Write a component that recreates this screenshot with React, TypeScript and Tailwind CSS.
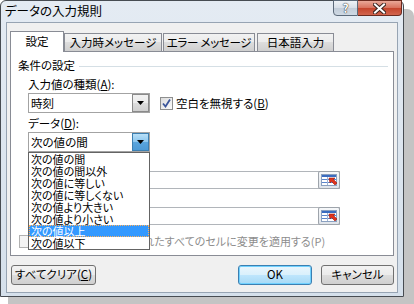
import React from 'react'

const items = [
  '次の値の間',
  '次の値の間以外',
  '次の値に等しい',
  '次の値に等しくない',
  '次の値より大きい',
  '次の値より小さい',
  '次の値以上',
  '次の値以下',
]

function Arrow() {
  return (
    <svg width="7" height="4" viewBox="0 0 7 4">
      <polygon points="0,0 7,0 3.5,4" fill="#000" />
    </svg>
  )
}

function Combo({ value, hot }: { value: string; hot?: boolean }) {
  return (
    <div className="flex h-[20px] w-[122px] border border-[#a3a3a3] bg-white">
      <div className="flex-1 pl-[2px] leading-[18px]">{value}</div>
      {hot ? (
        <div className="flex w-[17px] items-center justify-center border border-[#3c7fb1] bg-[linear-gradient(#b9e0f8_0%,#8cc6ee_50%,#5aa5dd_50%,#4d9ad6_100%)]">
          <Arrow />
        </div>
      ) : (
        <div className="flex w-[17px] items-center justify-center border border-[#8a8a8a] bg-[linear-gradient(#f2f2f2_0%,#ebebeb_50%,#dddddd_50%,#cfcfcf_100%)]">
          <Arrow />
        </div>
      )}
    </div>
  )
}

function RangeIcon() {
  return (
    <svg width="17" height="12" viewBox="0 0 17 12">
      <rect x="0.5" y="0.5" width="15" height="11" fill="#fff" stroke="#8aa0c0" />
      <rect x="1" y="1" width="14" height="2" fill="#3a6cc0" />
      <line x1="1" y1="5.5" x2="15" y2="5.5" stroke="#5b86cc" />
      <line x1="1" y1="8.5" x2="15" y2="8.5" stroke="#5b86cc" />
      <line x1="6.5" y1="3" x2="6.5" y2="11" stroke="#9fb3d3" />
      <polygon points="8,4 14,4 12.5,5.5 16,9 14,11 10.5,7.5 9,9" fill="#e0321c" stroke="#9c1a0c" strokeWidth="0.6" />
    </svg>
  )
}

function RangeInput() {
  return (
    <div className="flex h-[18px] w-[312px] border border-[#b1b5ba] bg-white">
      <div className="flex-1" />
      <div className="-my-px -mr-px flex w-[22px] items-center justify-center rounded-[2px] border border-[#9ea4ab] bg-[linear-gradient(#f6f8fa,#dfe4ea)]">
        <RangeIcon />
      </div>
    </div>
  )
}

export default function App() {
  return (
    <div className="relative h-[304px] w-[414px] overflow-hidden bg-white font-['Noto_Sans_CJK_JP',sans-serif] text-[11.5px] text-black [font-feature-settings:'palt']">
      {/* Window */}
      <div className="flex h-[297px] w-[404px] flex-col rounded-t-[6px] border border-[#474c52] bg-[linear-gradient(#e4ebf3,#d5e0eb)] shadow-[9px_10px_0_1px_#c4c4c4]">
        {/* Title bar */}
        <div className="flex h-[21px] items-start justify-between">
          <div className="pl-[4px] pt-[1px] text-[12.5px] leading-[18px]">データの入力規則</div>
          <div className="-mt-px mr-[1px] flex">
            <div className="flex h-[16px] w-[25px] items-center justify-center rounded-bl-[4px] border border-[#5c6a7a] bg-[linear-gradient(#eef2f6_0%,#d6dee7_50%,#c1ccd8_50%,#cfd9e4_100%)] text-[12px] font-bold leading-none text-white [text-shadow:0_0_1px_#222,0_0_1px_#222]">
              ?
            </div>
            <div className="flex h-[16px] w-[44px] items-center justify-center rounded-br-[4px] border border-l-0 border-[#6b2a1f] bg-[linear-gradient(#e9a898_0%,#d8705c_50%,#c4432b_50%,#d2654e_100%)]">
              <svg width="13" height="11" viewBox="0 0 13 11">
                <path d="M2 1.5 L11 9.5 M11 1.5 L2 9.5" stroke="#3b2420" strokeWidth="4" strokeLinecap="square" />
                <path d="M2 1.5 L11 9.5 M11 1.5 L2 9.5" stroke="#fff" strokeWidth="2" strokeLinecap="square" />
              </svg>
            </div>
          </div>
        </div>

        {/* Client area */}
        <div className="mx-[5px] flex h-[271px] flex-col border border-[#97a4b3] bg-[#f0f0f0]">
          {/* Tabs */}
          <div className="relative z-10 mt-[8px] flex h-[20px] items-end whitespace-nowrap pl-[3px]">
            <div className="-mb-px flex h-[21px] w-[54px] items-center justify-center border border-b-0 border-[#898c95] bg-white">
              設定
            </div>
            <div className="flex h-[18px] w-[98px] items-center justify-center border border-b-0 border-[#898c95] bg-[linear-gradient(#f2f2f2_0%,#ebebeb_50%,#dddddd_50%,#cfcfcf_100%)]">
              入力時メッセージ
            </div>
            <div className="ml-[1px] flex h-[18px] w-[92px] items-center justify-center border border-b-0 border-[#898c95] bg-[linear-gradient(#f2f2f2_0%,#ebebeb_50%,#dddddd_50%,#cfcfcf_100%)] tracking-[-0.3px]">
              エラー メッセージ
            </div>
            <div className="ml-[2px] flex h-[18px] w-[77px] items-center justify-center border border-b-0 border-[#898c95] bg-[linear-gradient(#f2f2f2_0%,#ebebeb_50%,#dddddd_50%,#cfcfcf_100%)]">
              日本語入力
            </div>
          </div>

          {/* Panel */}
          <div className="ml-[3px] flex h-[205px] w-[384px] flex-col border border-[#898c95] bg-white">
            <div className="mt-[6px] flex h-[14px] items-start pl-[7px] leading-[14px]">
              <span>条件の設定</span>
              <div className="mr-[5px] ml-[4px] mt-[8px] h-px flex-1 bg-[#d5dfe5]" />
            </div>

            <div className="pl-[17px]">
              <div className="mt-[5px] h-[14px] leading-[14px]">
                入力値の種類(<span className="underline">A</span>):
              </div>
              <div className="mt-[2px] flex items-center">
                <Combo value="時刻" />
                <div className="ml-[10px] flex h-[13px] w-[13px] items-center justify-center border border-[#8e8f8f] bg-[linear-gradient(135deg,#dcdcdc,#fbfbfb)]">
                  <svg width="9" height="9" viewBox="0 0 9 9">
                    <path d="M1 4.5 L3.5 7.5 L8 0.5" fill="none" stroke="#3a559a" strokeWidth="1.8" />
                  </svg>
                </div>
                <div className="ml-[3px] leading-[14px]">
                  空白を無視する(<span className="underline">B</span>)
                </div>
              </div>

              <div className="mt-[3px] h-[14px] leading-[14px]">
                データ(<span className="underline">D</span>):
              </div>
              <div className="mt-[2px]">
                <Combo value="次の値の間" hot />
              </div>

              <div className="mt-[3px] h-[14px] leading-[14px]">
                最小値(<span className="underline">M</span>):
              </div>
              <div className="mt-[2px]">
                <RangeInput />
              </div>
              <div className="mt-[3px] h-[14px] leading-[14px]">
                最大値(<span className="underline">X</span>):
              </div>
              <div className="mt-[1px]">
                <RangeInput />
              </div>
            </div>

            <div className="mt-[9px] flex h-[14px] items-center pl-[8px] text-[#8d8d8d]">
              <div className="h-[13px] w-[13px] border border-[#b1b1b1] bg-[#f4f4f4]" />
              <div className="ml-[4px] text-[11px] leading-[14px]">同じ入力規則が設定されたすべてのセルに変更を適用する(P)</div>
            </div>
          </div>

          {/* Buttons */}
          <div className="mt-[9px] flex h-[20px] pl-[4px]">
            <div className="flex w-[85px] items-center justify-center rounded-[3px] border border-[#707070] bg-[linear-gradient(#f2f2f2_0%,#ebebeb_50%,#dddddd_50%,#cfcfcf_100%)]">
              すべてクリア(<span className="underline">C</span>)
            </div>
            <div className="ml-[142px] flex w-[74px] items-center justify-center rounded-[3px] border border-[#3c7fb1] bg-[linear-gradient(#eaf6fd_0%,#d9f0fc_50%,#bee6fd_50%,#a7d9f5_100%)] shadow-[inset_0_0_0_1px_#6fd1ff]">
              OK
            </div>
            <div className="ml-[9px] flex w-[73px] items-center justify-center rounded-[3px] border border-[#707070] bg-[linear-gradient(#f2f2f2_0%,#ebebeb_50%,#dddddd_50%,#cfcfcf_100%)]">
              キャンセル
            </div>
          </div>
        </div>
      </div>

      {/* Open dropdown list */}
      <div className="absolute left-[28px] top-[152px] z-20 w-[122px] border border-[#646464] bg-white text-[11px]">
        {items.map((t) => (
          <div
            key={t}
            className={
              t === '次の値以上'
                ? 'h-[12px] border border-dotted border-[#ffb25e] bg-[#3399ff] pl-[1px] leading-[10px] text-white'
                : 'h-[12px] pl-[2px] leading-[12px]'
            }
          >
            {t}
          </div>
        ))}
      </div>
    </div>
  )
}
